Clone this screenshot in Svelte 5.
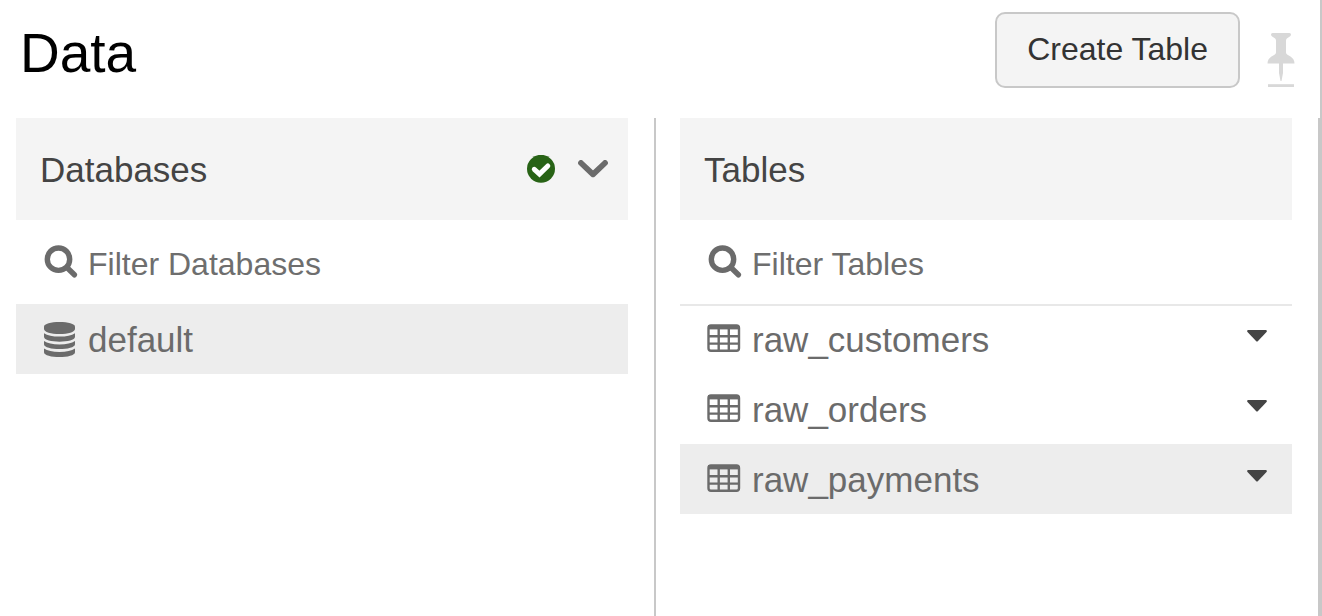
<script>
  let dbFilter = $state('');
  let tableFilter = $state('');
  let selected = $state('raw_payments');
  const databases = ['default'];
  const tables = ['raw_customers', 'raw_orders', 'raw_payments'];
  const match = (list, text) => list.filter((n) => n.toLowerCase().includes(text.toLowerCase()));
</script>

{#snippet searchIcon()}
  <svg class="icon" width="36" height="36" viewBox="0 0 36 36" fill="none" stroke="currentColor" aria-hidden="true">
    <circle cx="14.500" cy="15.200" r="11.200" stroke-width="5.400" />
    <path d="M23.200 23.800 30.400 30.800" stroke-width="5.400" stroke-linecap="round" />
  </svg>
{/snippet}

<div class="page">
  <header>
    <h1>Data</h1>
    <button class="create" type="button">Create Table</button>
    <button class="pin" type="button" aria-label="Pin panel">
      <svg width="28" height="56" viewBox="0 0 28 56" fill="currentColor" aria-hidden="true">
        <path d="M5.500 1H22.500Q24 1 24 2.500Q24 4 22.500 4.700L20.500 6Q19 6.800 19 8.500V20.500Q19 22 20.500 22.800L23.500 24.500Q27.500 27 27.500 31.500H.5Q.5 27 4.500 24.500L7.500 22.800Q9 22 9 20.500V8.500Q9 6.800 7.500 6L5.500 4.700Q4 4 4 2.500Q4 1 5.500 1Z" />
        <path d="M12 31H16V41L14.500 49H13.500L12 41Z" />
        <path d="M1 52.200H27V55H1Z" />
      </svg>
    </button>
  </header>

  <main>
    <section class="databases">
      <div class="head">
        <h2>Databases</h2>
        <svg width="28" height="28" viewBox="0 0 28 28" role="img" aria-label="Connected">
          <circle cx="14" cy="13.800" r="14" fill="#286316" />
          <path d="M7.300 14.300 12.500 19 20.800 11" fill="none" stroke="#fff" stroke-width="5" stroke-linecap="round" stroke-linejoin="miter" />
        </svg>
        <button class="toggle" type="button" aria-label="Switch database">
          <svg width="30" height="18" viewBox="0 0 30 18" fill="none" stroke="currentColor" aria-hidden="true">
            <path d="M3 3 15 14.300 27 3" stroke-width="5.800" stroke-linecap="round" stroke-linejoin="round" />
          </svg>
        </button>
      </div>
      <label class="filter">
        {@render searchIcon()}
        <input type="text" aria-label="Filter Databases" placeholder="Filter Databases" bind:value={dbFilter} />
      </label>
      <ul>
        {#each match(databases, dbFilter) as name}
          <li class="active">
            <button class="name" type="button">
              <svg class="icon" width="36" height="36" viewBox="0 0 36 36" fill="currentColor" aria-hidden="true">
                <path d="M15.500 1C24 1 31 3 31 5.500V8C31 11 24 13 15.500 13S0 11 0 8V5.500C0 3 7 1 15.500 1Z" />
                <path d="M0 12.200Q5 15.600 15.500 15.600T31 12.200V15.800C31 22.300 0 22.300 0 15.800Z" />
                <path d="M0 20Q5 23.400 15.500 23.400T31 20V23.300C31 29.700 0 29.700 0 23.300Z" />
                <path d="M0 27.600Q5 31 15.500 31T31 27.600V31.300C31 37.700 0 37.700 0 31.300Z" />
              </svg>
              <span>{name}</span>
            </button>
          </li>
        {/each}
      </ul>
    </section>

    <section class="tables">
      <div class="head">
        <h2>Tables</h2>
      </div>
      <label class="filter">
        {@render searchIcon()}
        <input type="text" aria-label="Filter Tables" placeholder="Filter Tables" bind:value={tableFilter} />
      </label>
      <ul>
        {#each match(tables, tableFilter) as name}
          <li class:active={selected === name}>
            <button class="name" type="button" onclick={() => (selected = name)}>
              <svg class="icon" width="36" height="36" viewBox="0 0 36 36" fill="none" stroke="currentColor" aria-hidden="true">
                <rect x="0.500" y="4.400" width="30.500" height="25.400" rx="2.500" stroke-width="2.400" />
                <path d="M0 6.200H31" stroke-width="4.400" />
                <path d="M0 15.200H31M0 22.600H31" stroke-width="2.400" />
                <path d="M10.700 6V30M20.800 6V30" stroke-width="2.400" />
              </svg>
              <span>{name}</span>
            </button>
            <button class="more" type="button" aria-label="Options for {name}">
              <svg width="20" height="12" viewBox="0 0 20 12" fill="currentColor" aria-hidden="true">
                <path d="M1 0H19Q20.500 .8 19.500 2L11 11Q10 12 9 11L.5 2Q-.5 .8 1 0Z" />
              </svg>
            </button>
          </li>
        {/each}
      </ul>
    </section>
  </main>
</div>

<style>
  :global(body) {
    margin: 0;
    background: #fff;
  }
  .page {
    box-sizing: border-box;
    min-height: 100vh;
    display: flex;
    flex-direction: column;
    border-right: 2px solid #c8c8c8;
    font-family: 'Liberation Sans', Arial, sans-serif;
    color: #6b6b6b;
  }
  button {
    margin: 0;
    padding: 0;
    border: 0;
    background: none;
    font: inherit;
    color: inherit;
    cursor: pointer;
  }
  svg {
    display: block;
    flex: none;
  }
  .icon {
    overflow: visible;
  }
  header {
    display: flex;
    align-items: flex-start;
    padding: 12px 25px 30px 20px;
  }
  h1 {
    flex: 1;
    margin: 0;
    padding-top: 9px;
    font-size: 55px;
    line-height: 64px;
    font-weight: 400;
    color: #000;
  }
  .create {
    padding: 17px 30px 19px;
    border: 2px solid #c8c8c8;
    border-radius: 10px;
    background: #f4f4f4;
    color: #333;
    font-size: 32px;
    line-height: 36px;
  }
  .pin {
    margin: 20px 0 0 27px;
    height: 56px;
    color: #d8d8d8;
  }
  main {
    flex: 1;
    display: flex;
  }
  section {
    flex: 1 1 0;
    min-width: 0;
    padding: 0 26px 0 24px;
    border-right: 2px solid #c8c8c8;
  }
  .databases {
    padding-left: 16px;
  }
  .head {
    display: flex;
    align-items: center;
    height: 102px;
    padding: 0 20px 0 24px;
    background: #f4f4f4;
  }
  h2 {
    flex: 1;
    margin: 0;
    padding-top: 2px;
    font-size: 35px;
    font-weight: 400;
    color: #444;
  }
  .toggle {
    margin-left: 23px;
  }
  .filter {
    box-sizing: border-box;
    display: flex;
    align-items: center;
    gap: 8px;
    height: 86px;
    margin-bottom: -2px;
    padding: 0 28px;
    border-bottom: 2px solid #e8e8e8;
  }
  input {
    flex: 1;
    min-width: 0;
    padding: 4px 0 0;
    border: 0;
    outline: 0;
    background: none;
    font: inherit;
    font-size: 32px;
    color: #6b6b6b;
  }
  input::placeholder {
    color: #6e6e6e;
    opacity: 1;
  }
  ul {
    margin: 0;
    padding: 0;
    list-style: none;
  }
  li {
    display: flex;
    align-items: center;
    height: 70px;
    padding: 0 25px 0 28px;
  }
  .active {
    background: #ededed;
  }
  .name {
    flex: 1;
    display: flex;
    align-items: center;
    gap: 8px;
    font-size: 35px;
    text-align: left;
  }
  .name span {
    padding-top: 2px;
  }
  .more {
    padding-bottom: 6px;
    color: #444;
  }
</style>
